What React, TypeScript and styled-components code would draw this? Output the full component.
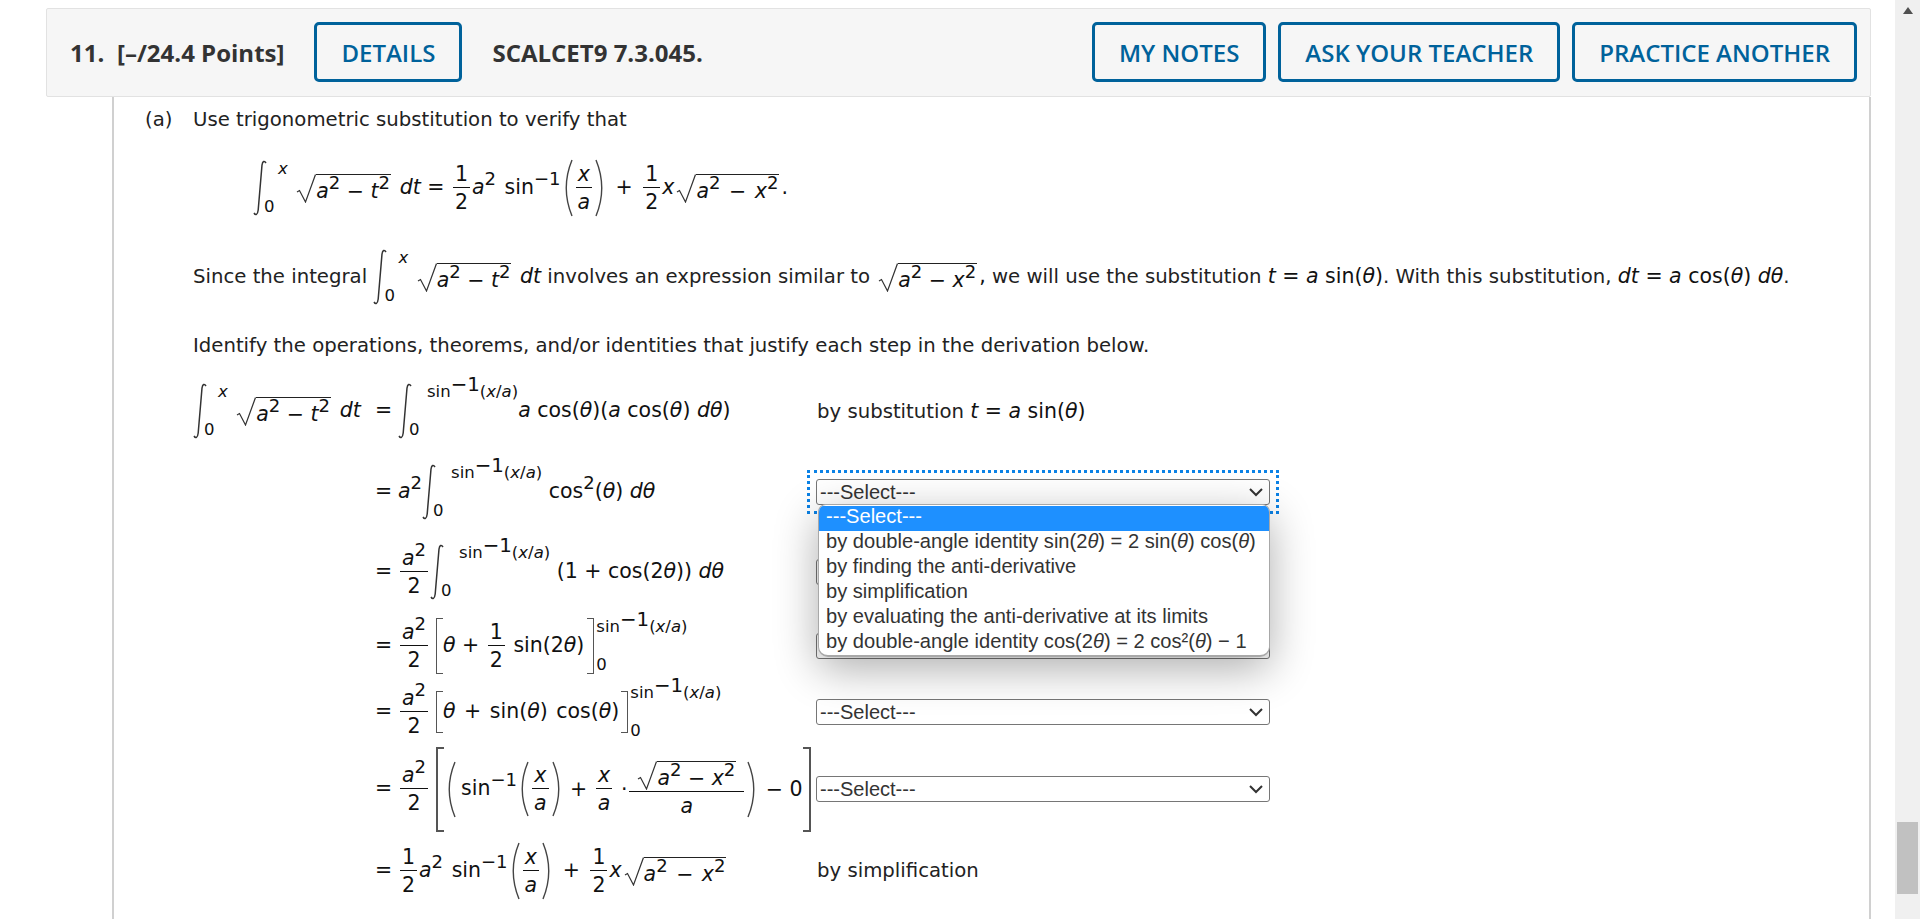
import React from "react";
import styled, { createGlobalStyle } from "styled-components";

const GlobalStyle = createGlobalStyle`
  html, body {
    margin: 0;
    height: 100%;
    overflow: hidden;
    background: #fff;
  }
`;

const Page = styled.div`
  display: flex;
  height: 919px;
  overflow: hidden;
`;

const Main = styled.div`
  flex: 1;
  min-width: 0;
  display: flex;
  flex-direction: column;
  padding: 8px 24px 0 46px;
`;

const ScrollTrack = styled.div`
  width: 25px;
  background: #f0f0f0;
  display: flex;
  flex-direction: column;
  align-items: center;
  justify-content: space-between;
  padding: 7px 0 25px;
  box-sizing: border-box;
`;

const ScrollArrow = styled.div`
  width: 0;
  height: 0;
  border-left: 5px solid transparent;
  border-right: 5px solid transparent;
  border-bottom: 7px solid #505050;
`;

const ScrollThumb = styled.div`
  width: 21px;
  height: 72px;
  background: #c1c1c1;
`;

const Header = styled.header`
  display: flex;
  align-items: center;
  height: 89px;
  flex: none;
  box-sizing: border-box;
  padding: 0 13px 1px 23px;
  background: #f6f6f6;
  border: 1px solid #e2e2e2;
  border-radius: 2px;
  font-family: "Open Sans", sans-serif;
  font-weight: 600;
  font-size: 24px;
  color: #333;
`;

const QuestionNo = styled.span`
  width: 47px;
  font-weight: 700;
`;

const Points = styled.span`
  margin-right: 30px;
  font-weight: 700;
`;

const Code = styled.span`
  margin-left: 30px;
  font-weight: 700;
`;

const HeaderActions = styled.div`
  margin-left: auto;
  display: flex;
  gap: 12px;
`;

const OutlineButton = styled.button`
  height: 60px;
  padding: 0 24px;
  box-sizing: border-box;
  background: #f6f6f6;
  border: 3px solid #00629b;
  border-radius: 5px;
  color: #00629b;
  font: inherit;
`;

const Panel = styled.section`
  flex: 1;
  margin-left: 66px;
  border-left: 2px solid #d0d0d0;
  border-right: 2px solid #d0d0d0;
  padding: 11px 0 0 31px;
  font-family: "DejaVu Sans", Verdana, sans-serif;
  font-size: 19.7px;
  line-height: 24px;
  color: #222;
`;

const Part = styled.div`
  display: flex;
`;

const PartLabel = styled.div`
  width: 48px;
  flex: none;
`;

const PartBody = styled.div`
  flex: 1;
  min-width: 0;
`;

const Para = styled.div<{ $top?: number; $h?: number }>`
  margin-top: ${(p) => p.$top ?? 0}px;
  height: ${(p) => (p.$h ? `${p.$h}px` : "auto")};
  white-space: nowrap;
`;

const Centered = styled(Para)`
  margin-left: 60px;
`;

const Derivation = styled.div`
  margin-top: 13px;
`;

const Row = styled.div<{ $h: number }>`
  display: grid;
  grid-template-columns: 182px 441px 1fr;
  align-items: center;
  height: ${(p) => p.$h}px;
  white-space: nowrap;
`;

const Note = styled.span`
  padding-left: 1px;
`;

const Eq = styled.span`
  display: inline-block;
  width: 23px;
`;

const M = styled.span<{ $wide?: boolean }>`
  font-size: 20.5px;
  color: #111;
  word-spacing: ${(p) => (p.$wide ? 2 : 0)}px;
`;

const V = styled.i`
  font-style: italic;
`;

const Sup = styled.sup`
  font-size: 0.88em;
  line-height: 0;
  vertical-align: 0.5em;
`;

const LimitPower = styled.sup`
  font-size: 1.2em;
  line-height: 0;
  vertical-align: 0.3em;
`;

const Lead = styled.span`
  margin-left: 4px;
`;

const FracBox = styled.span`
  display: inline-flex;
  flex-direction: column;
  align-items: stretch;
  vertical-align: middle;
  text-align: center;
  margin: 0 2px;
`;

const FracTop = styled.span<{ $pad?: number }>`
  padding: 0 ${(p) => p.$pad ?? 2}px 1px;
  border-bottom: 1px solid #111;
`;

const FracBottom = styled.span`
  padding: 2px 2px 0;
`;

const IntBox = styled.span`
  display: inline-flex;
  vertical-align: middle;
`;

const Limits = styled.span<{ $h: number }>`
  display: inline-flex;
  flex-direction: column;
  justify-content: space-between;
  vertical-align: middle;
  height: ${(p) => p.$h}px;
  font-size: 16.5px;
  line-height: 18px;
`;

const IntLimits = styled(Limits)`
  margin-left: -3px;
`;

const BracketLimits = styled(Limits)`
  margin-left: 2px;
`;

const UpperLimit = styled.span<{ $indent?: number }>`
  padding-left: ${(p) => p.$indent ?? 0}px;
`;

const SqrtBox = styled.span`
  display: inline-flex;
  vertical-align: middle;
  margin: 0 2px;
`;

const SqrtBody = styled.span`
  border-top: 1px solid #222;
  padding: 4px 1px 0 0;
  line-height: 24px;
`;

const Bracket = styled.span<{ $h: number; $side: "left" | "right"; $heavy?: boolean; $gap?: number }>`
  display: inline-block;
  vertical-align: middle;
  box-sizing: border-box;
  width: ${(p) => (p.$heavy ? 8 : 7)}px;
  height: ${(p) => p.$h}px;
  margin-left: ${(p) => (p.$side === "left" ? 6 : p.$gap ?? 0)}px;
  border: ${(p) => (p.$heavy ? 2 : 1.5)}px solid #555;
  border-${(p) => (p.$side === "left" ? "right" : "left")}: none;
`;

const DelimSvg = styled.svg`
  display: inline-block;
  vertical-align: middle;
`;

const SelectWrap = styled.div<{ $focus?: boolean }>`
  position: relative;
  width: 454px;
  height: 26px;
  outline: ${(p) => (p.$focus ? "3px dotted #0b82e6" : "none")};
  outline-offset: 6px;
`;

const NativeSelect = styled.select`
  display: block;
  appearance: none;
  width: 100%;
  height: 100%;
  box-sizing: border-box;
  padding: 0 3px;
  background: #fff;
  border: 1px solid #767676;
  border-radius: 3px;
  color: #333;
  font-family: "Liberation Sans", Arial, sans-serif;
  font-size: 20px;
  outline: none;
`;

const Chevron = styled.svg`
  position: absolute;
  top: 9px;
  right: 7px;
  pointer-events: none;
`;

const OptionList = styled.div`
  position: absolute;
  top: 25px;
  left: 2px;
  right: 0;
  z-index: 5;
  box-sizing: border-box;
  height: 153px;
  padding-top: 1px;
  background: #fff;
  border: 1px solid #a8a8a8;
  border-bottom-width: 2px;
  border-radius: 8px 8px 10px 10px;
  box-shadow: 0 12px 44px rgba(0, 0, 0, 0.32);
  overflow: hidden;
  font-family: "Liberation Sans", Arial, sans-serif;
  font-size: 20.1px;
  line-height: 20px;
  color: #333;
`;

const OptionItem = styled.div<{ $active?: boolean }>`
  height: 25px;
  padding-left: 7px;
  white-space: nowrap;
  background: ${(p) => (p.$active ? "#1e90ff" : "transparent")};
  color: ${(p) => (p.$active ? "#fff" : "inherit")};
`;

const Theta = () => <V>θ</V>;

const Frac = ({
  top,
  bottom,
  pad
}: {
  top: React.ReactNode;
  bottom: React.ReactNode;
  pad?: number;
}) => (
  <FracBox>
    <FracTop $pad={pad}>{top}</FracTop>
    <FracBottom>{bottom}</FracBottom>
  </FracBox>
);

const IntegralGlyph = ({ h }: { h: number }) => (
  <svg width="14" height={h} viewBox={`0 0 14 ${h}`} fill="none">
    <path
      d={`M13 3 C11.5 0.5 9.6 1 9 5 L5.2 ${h - 6} C4.6 ${h - 1} 2.5 ${h - 0.5} 1 ${h - 3}`}
      stroke="#333"
      strokeWidth="1.5"
    />
  </svg>
);

const Integral = ({
  upper,
  lower,
  indent,
  h = 56
}: {
  upper: React.ReactNode;
  lower: React.ReactNode;
  indent: number;
  h?: number;
}) => (
  <IntBox>
    <IntegralGlyph h={h} />
    <IntLimits $h={h}>
      <UpperLimit $indent={indent}>{upper}</UpperLimit>
      <span>{lower}</span>
    </IntLimits>
  </IntBox>
);

const Sqrt = ({ children }: { children: React.ReactNode }) => (
  <SqrtBox>
    <svg width="20" height="29" viewBox="0 0 20 29" fill="none">
      <path d="M1 18 L3.5 16.5 L9.5 28 L19.5 0.5" stroke="#333" strokeWidth="1.2" />
    </svg>
    <SqrtBody>{children}</SqrtBody>
  </SqrtBox>
);

const Paren = ({ h, side }: { h: number; side: "left" | "right" }) => (
  <DelimSvg width="13" height={h} viewBox={`0 0 13 ${h}`} fill="none">
    <path
      d={
        side === "left"
          ? `M11 1 Q-0.5 ${h / 2} 11 ${h - 1}`
          : `M2 1 Q13.5 ${h / 2} 2 ${h - 1}`
      }
      stroke="#444"
      strokeWidth="1.4"
    />
  </DelimSvg>
);

const ArcLimit = () => (
  <>
    sin<LimitPower>−1</LimitPower>(<V>x</V>/<V>a</V>)
  </>
);

const RootAT = () => (
  <Sqrt>
    <V>a</V>
    <Sup>2</Sup> − <V>t</V>
    <Sup>2</Sup>
  </Sqrt>
);

const RootAX = () => (
  <Sqrt>
    <V>a</V>
    <Sup>2</Sup> − <V>x</V>
    <Sup>2</Sup>
  </Sqrt>
);

const ASquared = () => (
  <>
    <V>a</V>
    <Sup>2</Sup>
  </>
);

const XOverA = ({ h = 58 }: { h?: number }) => (
  <>
    <Paren h={h} side="left" />
    <Frac top={<V>x</V>} bottom={<V>a</V>} />
    <Paren h={h} side="right" />
  </>
);

const Inverse = () => (
  <>
    sin<Sup>−1</Sup>
  </>
);

const Result = () => (
  <M $wide>
    <Frac top="1" bottom="2" />
    <ASquared /> <Inverse />
    <XOverA /> + <Frac top="1" bottom="2" />
    <V>x</V>
    <RootAX />
  </M>
);

const AHalf = () => <Frac top={<ASquared />} bottom="2" />;

const options = [
  <>---Select---</>,
  <>
    by double-angle identity sin(2<Theta />) = 2 sin(<Theta />) cos(<Theta />)
  </>,
  <>by finding the anti-derivative</>,
  <>by simplification</>,
  <>by evaluating the anti-derivative at its limits</>,
  <>
    by double-angle identity cos(2<Theta />) = 2 cos²(<Theta />) − 1
  </>
];

const ChevronIcon = () => (
  <Chevron width="14" height="9" viewBox="0 0 14 9" fill="none">
    <path d="M1 1 L7 7 L13 1" stroke="#333" strokeWidth="2" />
  </Chevron>
);

const Select = () => (
  <SelectWrap>
    <NativeSelect defaultValue="">
      <option value="">---Select---</option>
    </NativeSelect>
    <ChevronIcon />
  </SelectWrap>
);

const App = () => {
  return (
    <Page>
      <GlobalStyle />
      <Main>
        <Header>
          <QuestionNo>11.</QuestionNo>
          <Points>[–/24.4 Points]</Points>
          <OutlineButton>DETAILS</OutlineButton>
          <Code>SCALCET9 7.3.045.</Code>
          <HeaderActions>
            <OutlineButton>MY NOTES</OutlineButton>
            <OutlineButton>ASK YOUR TEACHER</OutlineButton>
            <OutlineButton>PRACTICE ANOTHER</OutlineButton>
          </HeaderActions>
        </Header>
        <Panel>
          <Part>
            <PartLabel>(a)</PartLabel>
            <PartBody>
              <Para>Use trigonometric substitution to verify that</Para>
              <Centered $top={27} $h={56}>
                <M>
                  <Integral upper={<V>x</V>} lower="0" indent={14} /> <RootAT /> <V>dt</V> ={" "}
                  <Result />.
                </M>
              </Centered>
              <Para $top={34} $h={56}>
                Since the integral{" "}
                <M>
                  <Integral upper={<V>x</V>} lower="0" indent={14} /> <RootAT /> <V>dt</V>
                </M>{" "}
                involves an expression similar to{" "}
                <M>
                  <RootAX />,
                </M>{" "}
                we will use the substitution{" "}
                <M>
                  <V>t</V> = <V>a</V> sin(<Theta />)
                </M>
                . With this substitution,{" "}
                <M>
                  <V>dt</V> = <V>a</V> cos(<Theta />) <V>d</V>
                  <Theta />
                </M>
                .
              </Para>
              <Para $top={29}>
                Identify the operations, theorems, and/or identities that justify each step in the
                derivation below.
              </Para>
              <Derivation>
                <Row $h={80}>
                  <M>
                    <Integral upper={<V>x</V>} lower="0" indent={14} /> <RootAT /> <V>dt</V>
                  </M>
                  <M>
                    <Eq>=</Eq>
                    <Integral upper={<ArcLimit />} lower="0" indent={18} />
                    <V>a</V> cos(<Theta />)(<V>a</V> cos(<Theta />) <V>d</V>
                    <Theta />)
                  </M>
                  <Note>
                    by substitution{" "}
                    <M>
                      <V>t</V> = <V>a</V> sin(<Theta />)
                    </M>
                  </Note>
                </Row>
                <Row $h={81}>
                  <span />
                  <M>
                    <Eq>=</Eq>
                    <ASquared />
                    <Integral upper={<ArcLimit />} lower="0" indent={18} /> cos<Sup>2</Sup>(
                    <Theta />) <V>d</V>
                    <Theta />
                  </M>
                  <SelectWrap $focus>
                    <NativeSelect defaultValue="">
                      <option value="">---Select---</option>
                    </NativeSelect>
                    <ChevronIcon />
                    <OptionList>
                      {options.map((option, i) => (
                        <OptionItem key={i} $active={i === 0}>
                          {option}
                        </OptionItem>
                      ))}
                    </OptionList>
                  </SelectWrap>
                </Row>
                <Row $h={80}>
                  <span />
                  <M>
                    <Eq>=</Eq>
                    <AHalf />
                    <Integral upper={<ArcLimit />} lower="0" indent={18} /> (1 + cos(2
                    <Theta />)) <V>d</V>
                    <Theta />
                  </M>
                  <Select />
                </Row>
                <Row $h={68}>
                  <span />
                  <M>
                    <Eq>=</Eq>
                    <AHalf />
                    <Bracket $h={56} $side="left" />
                    <Theta /> + <Frac top="1" bottom="2" /> sin(2
                    <Theta />)<Bracket $h={56} $side="right" $gap={3} />
                    <BracketLimits $h={56}>
                      <span>
                        <ArcLimit />
                      </span>
                      <span>0</span>
                    </BracketLimits>
                  </M>
                  <Select />
                </Row>
                <Row $h={63}>
                  <span />
                  <M $wide>
                    <Eq>=</Eq>
                    <AHalf />
                    <Bracket $h={42} $side="left" />
                    <Theta /> + sin(<Theta />) cos(
                    <Theta />)<Bracket $h={42} $side="right" $gap={2} />
                    <BracketLimits $h={56}>
                      <span>
                        <ArcLimit />
                      </span>
                      <span>0</span>
                    </BracketLimits>
                  </M>
                  <Select />
                </Row>
                <Row $h={92}>
                  <span />
                  <M>
                    <Eq>=</Eq>
                    <AHalf />
                    <Bracket $h={85} $side="left" $heavy />
                    <Paren h={57} side="left" />
                    <Lead>
                      <Inverse />
                    </Lead>
                    <XOverA h={56} /> + <Frac top={<V>x</V>} bottom={<V>a</V>} /> ·
                    <Frac top={<RootAX />} bottom={<V>a</V>} pad={6} />
                    <Paren h={57} side="right" /> − 0<Bracket $h={85} $side="right" $heavy />
                  </M>
                  <Select />
                </Row>
                <Row $h={72}>
                  <span />
                  <M>
                    <Eq>=</Eq>
                    <Result />
                  </M>
                  <Note>by simplification</Note>
                </Row>
              </Derivation>
            </PartBody>
          </Part>
        </Panel>
      </Main>
      <ScrollTrack>
        <ScrollArrow />
        <ScrollThumb />
      </ScrollTrack>
    </Page>
  );
};

export default App;
